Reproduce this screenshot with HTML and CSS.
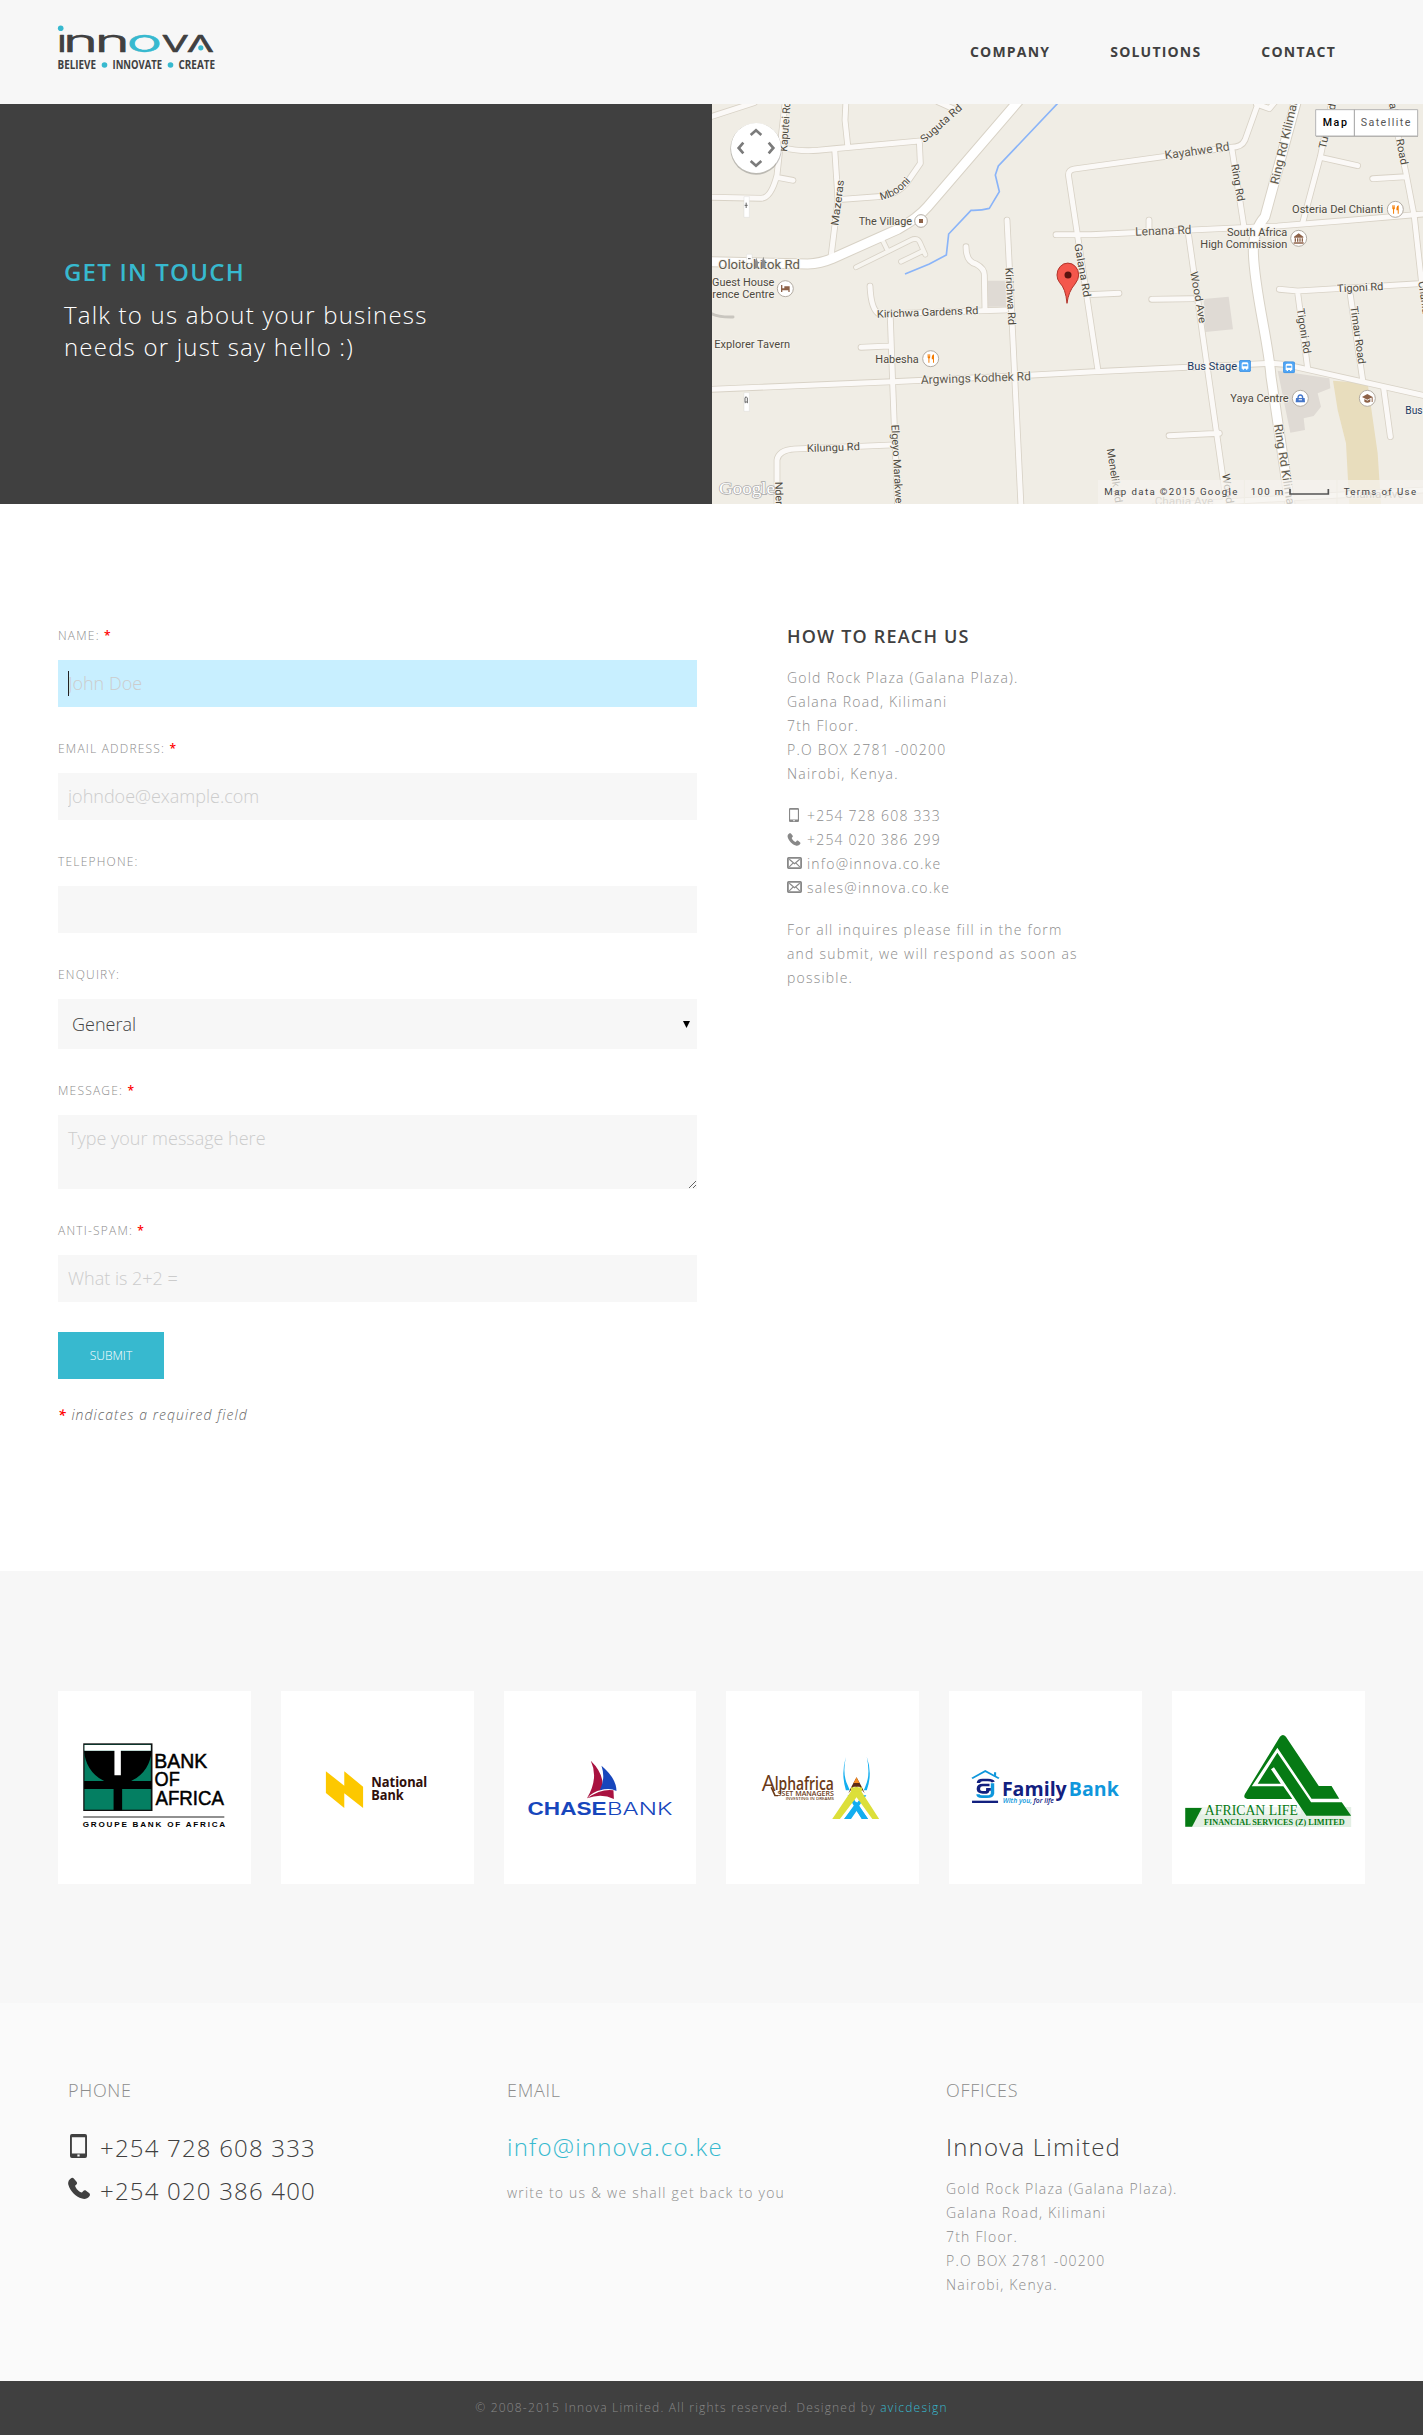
FILE: index.html
```html
<!DOCTYPE html>
<html lang="en">
<head>
<meta charset="utf-8">
<title>Innova Limited - Contact</title>
<link rel="stylesheet" href="styles.css">
</head>
<body>
<svg class="sprite" width="0" height="0" aria-hidden="true">
  <symbol id="i-mobile" viewBox="0 0 18 24" preserveAspectRatio="none"><path fill="currentColor" fill-rule="evenodd" d="M2 0h14a2 2 0 0 1 2 2v20a2 2 0 0 1-2 2H2a2 2 0 0 1-2-2V2a2 2 0 0 1 2-2zm0 3.200v16.300h14V3.200zM7.800 20.600v2h2.400v-2z"/></symbol>
  <symbol id="i-phone" viewBox="0 0 24 24"><path fill="currentColor" d="M3 1C4 0 5.500 0 6.300 1l3 3.600c.9 1 .8 2-.1 2.900L7.700 9c1 3.500 4.300 6.700 7.500 7.400l1.500-1.700c.8-.9 2-1 3-.2l3.300 2.500c1.200.9 1.300 2.200.3 3.400-2 2.500-4.800 3.600-8 2.600C8 21 2.400 14.500.3 7.500-.3 5 .8 2.600 3 1z"/></symbol>
  <symbol id="i-mail" viewBox="0 0 20 16"><rect x="1.200" y="1.200" width="17.600" height="13.600" rx="1" fill="none" stroke="currentColor" stroke-width="2.400"/><path fill="none" stroke="currentColor" stroke-width="1.500" d="M3 3l7 6 7-6M3 13.200l5-5M17 13.200l-5-5"/></symbol>
  <symbol id="i-food" viewBox="0 0 24 26"><path fill="#f57c00" d="M2 0h2v7h1V0h2v7h1V0h2v9q0 3-2.500 4V26h-3V13Q2 12 2 9zM22 0v26h-3V15h-4V8q1-7 7-8z"/></symbol>
  <symbol id="i-bus" viewBox="0 0 36 36"><rect x="1" y="1" width="34" height="34" rx="5" fill="#4fa5f5" stroke="#2f86dc" stroke-width="2"/><path fill="#fff" fill-rule="evenodd" d="M12 7h12q4 0 4 5v14h-3v3h-4v-3h-6v3h-4v-3H8V12q0-5 4-5zm-1 6v6h14v-6z"/></symbol>
</svg>

<header class="header">
  <a class="logo" href="#" aria-label="Innova">
    <svg width="160" height="50" viewBox="57 24 160 50">
      <g class="word">
        <text transform="translate(56.600 52) scale(1.500 1)">ı</text>
        <text transform="translate(63 52) scale(1.920 1)">n</text>
        <text transform="translate(94.700 52) scale(1.920 1)">n</text>
        <text class="cy" transform="translate(126.700 52) scale(1.920 1)">o</text>
        <text transform="translate(161 52) scale(1.650 1)">v</text>
        <text transform="translate(214.500 35) rotate(180) scale(1.650 1)">v</text>
      </g>
      <g class="dots"><circle cx="60.700" cy="28.300" r="2.800"/><circle cx="200.800" cy="47.800" r="2.600"/><circle cx="104.500" cy="65" r="2.800"/><circle cx="170.500" cy="65" r="2.800"/></g>
      <g class="tag"><text x="57.500" y="69" textLength="38.500" lengthAdjust="spacingAndGlyphs">BELIEVE</text><text x="112.500" y="69" textLength="49.500" lengthAdjust="spacingAndGlyphs">INNOVATE</text><text x="178.500" y="69" textLength="36.500" lengthAdjust="spacingAndGlyphs">CREATE</text></g>
    </svg>
  </a>
  <nav class="nav"><a href="#">COMPANY</a><a href="#">SOLUTIONS</a><a href="#">CONTACT</a></nav>
</header>

<section class="hero">
  <div class="intro">
    <h1>GET IN TOUCH</h1>
    <p>Talk to us about your business<br>needs or just say hello :)</p>
  </div>
  <svg class="map" width="711" height="400" viewBox="3 12 2133 1200">
    <defs>
      <g id="minor">
        <path d="M0 50L130 8M222 12L205 160L198 225Q180 295 150 295L0 292M198 232L246 241M405 0L402 60L410 135M215 142Q260 155 320 151L370 146L625 123L628 190L590 245Q560 285 500 290L395 298M371 146L381 300L360 470M680 5L730 28"/>
        <path d="M477 558Q480 630 505 642L885 630M765 440Q765 485 795 492Q820 505 820 525L822 630M888 360L900 600L930 1220M538 655L545 850L550 980L560 1220M450 742L535 738"/>
        <path d="M0 868L545 845L950 826L1150 815L1680 790L1720 793L2140 887M198 1220V1080Q203 1050 250 1047L540 1035"/>
        <path d="M1160 805L1073 230Q1070 210 1090 207L1560 142Q1592 142 1602 120L1642 8M1636 12L1675 26L1690 8M1035 404H1140L1440 390L1700 378L1900 362L2140 342M1562 142L1598 375M1314 360V395M1432 400L1480 740L1548 1220M1130 584L1224 580M1322 598L1445 596M1374 1007L1525 1000"/>
        <path d="M1862 8L1828 170L1776 365M1828 172L1940 197M2040 8L2085 220L2110 350L2132 550M1985 236L2085 230M1705 568L1760 573L2140 550M1760 578L1790 805M1918 585L1955 840M2018 865L2038 1010M1330 1218L2140 1170"/>
      </g>
      <path id="lot" d="M435 502L600 420Q620 410 628 430L643 464M570 485L638 452M512 415L530 452"/>
      <path id="major" d="M0 485L290 492Q330 490 365 475L560 388Q620 355 650 320L930 -6M1757 0L1662 350Q1627 390 1627 450C1627 560 1672 720 1680 830L1738 1220"/>
    </defs>
    <rect x="0" y="0" width="2140" height="1220" fill="#f0ede5"/>
    <g fill="#dfdad4"><path d="M830 542h56v78h-56zM1478 597L1553 590L1566 688L1483 696zM1700 812L1855 835L1858 865L1820 880L1830 920L1808 948L1778 955L1782 990L1738 998z"/></g>
    <path fill="#e8ddbd" d="M1866 842L1970 850L2000 1060L2010 1215L1915 1215L1905 1030L1880 930z"/>
    <path d="M0 640Q20 652 66 651" fill="none" stroke="#c9c6bf" stroke-width="9" stroke-linecap="round"/>
    <use class="case" href="#minor"/><use class="case lot" href="#lot"/><use class="case big" href="#major"/>
    <use class="road" href="#minor"/><use class="road lot" href="#lot"/><use class="road big" href="#major"/>
    <path class="river" d="M1042 8L862 198L853 225L865 275L835 325Q810 332 780 331L713 402L706 465L655 492L582 522"/>

    <g class="lbl">
      <text transform="translate(228 155) rotate(-86)" textLength="150" lengthAdjust="spacingAndGlyphs">Kaputei Rd</text>
      <text transform="translate(640 130) rotate(-42)" textLength="155" lengthAdjust="spacingAndGlyphs">Suguta Rd</text>
      <text transform="translate(382 378) rotate(-83)" textLength="138" lengthAdjust="spacingAndGlyphs">Mazeras</text>
      <path id="mbo" d="M510 300Q560 292 608 234" fill="none" stroke="none"/><text><textPath href="#mbo">Mbooni</textPath></text>
      <text x="443" y="374" textLength="160" lengthAdjust="spacingAndGlyphs">The Village</text>
      <text class="l" x="22" y="508" textLength="245" lengthAdjust="spacingAndGlyphs">Oloitokitok Rd</text>
      <text x="3" y="558" textLength="187" lengthAdjust="spacingAndGlyphs">Guest House</text>
      <text x="4" y="593" textLength="186" lengthAdjust="spacingAndGlyphs">rence Centre</text>
      <text x="10" y="743" textLength="227" lengthAdjust="spacingAndGlyphs">Explorer Tavern</text>
      <text transform="translate(498 653) rotate(-2)" textLength="305" lengthAdjust="spacingAndGlyphs">Kirichwa Gardens Rd</text>
      <text x="493" y="788" textLength="130" lengthAdjust="spacingAndGlyphs">Habesha</text>
      <text class="l" transform="translate(630 852) rotate(-2)" textLength="330" lengthAdjust="spacingAndGlyphs">Argwings Kodhek Rd</text>
      <text transform="translate(883 503) rotate(87)" textLength="173" lengthAdjust="spacingAndGlyphs">Kirichwa Rd</text>
      <text transform="translate(288 1056) rotate(-2)" textLength="159" lengthAdjust="spacingAndGlyphs">Kilungu Rd</text>
      <text transform="translate(541 974) rotate(87)" textLength="237" lengthAdjust="spacingAndGlyphs">Elgeyo Marakwe</text>
      <text transform="translate(192 1146) rotate(88)">Nderi Rd</text>
      <text class="l" transform="translate(1363 178) rotate(-8)" textLength="196" lengthAdjust="spacingAndGlyphs">Kayahwe Rd</text>
      <text transform="translate(1560 194) rotate(80)" textLength="113" lengthAdjust="spacingAndGlyphs">Ring Rd</text>
      <text class="l" transform="translate(1702 255) rotate(-77)" textLength="275" lengthAdjust="spacingAndGlyphs">Ring Rd Kilimani</text>
      <text class="l" transform="translate(1273 407) rotate(-2)" textLength="169" lengthAdjust="spacingAndGlyphs">Lenana Rd</text>
      <text x="1548" y="407" textLength="181" lengthAdjust="spacingAndGlyphs">South Africa</text>
      <text x="1468" y="443" textLength="261" lengthAdjust="spacingAndGlyphs">High Commission</text>
      <text x="1743" y="338" textLength="274" lengthAdjust="spacingAndGlyphs">Osteria Del Chianti</text>
      <text transform="translate(1844 148) rotate(-77)" textLength="138" lengthAdjust="spacingAndGlyphs">Turbo Rd</text>
      <text transform="translate(2026 -30) rotate(79)" textLength="230" lengthAdjust="spacingAndGlyphs">Chaka nu Road</text>
      <text transform="translate(1090 433) rotate(80)" textLength="162" lengthAdjust="spacingAndGlyphs">Galana Rd</text>
      <text transform="translate(1438 517) rotate(80)" textLength="156" lengthAdjust="spacingAndGlyphs">Wood Ave</text>
      <text transform="translate(1879 577) rotate(-3)" textLength="139" lengthAdjust="spacingAndGlyphs">Tigoni Rd</text>
      <text transform="translate(1757 627) rotate(81)" textLength="137" lengthAdjust="spacingAndGlyphs">Tigoni Rd</text>
      <text transform="translate(1918 620) rotate(82)" textLength="175" lengthAdjust="spacingAndGlyphs">Timau Road</text>
      <text transform="translate(2122 545) rotate(82)">Chania</text>
      <text class="bus" x="1429" y="809" textLength="149" lengthAdjust="spacingAndGlyphs">Bus Stage</text>
      <text x="1558" y="905" textLength="175" lengthAdjust="spacingAndGlyphs">Yaya Centre</text>
      <text class="bus" x="2083" y="941" textLength="52" lengthAdjust="spacingAndGlyphs">Bus</text>
      <text class="l" transform="translate(1689 974) rotate(81)" textLength="275" lengthAdjust="spacingAndGlyphs">Ring Rd Kilimani</text>
      <text transform="translate(1187 1047) rotate(81)" textLength="165" lengthAdjust="spacingAndGlyphs">Menelik Rd</text>
      <text transform="translate(1534 1123) rotate(82)" textLength="156" lengthAdjust="spacingAndGlyphs">Wood Ave</text>
      <text x="1331" y="1216" opacity=".6" textLength="176" lengthAdjust="spacingAndGlyphs">Chania Ave</text>
      <text x="1902" y="1194" opacity=".6" textLength="176" lengthAdjust="spacingAndGlyphs">Chania Ave</text>
    </g>

    <g class="poi"><circle cx="630" cy="363" r="19"/><circle cx="223" cy="566" r="24"/><circle cx="659" cy="776" r="24"/><circle cx="2053" cy="328" r="24"/><circle cx="1763" cy="415" r="24"/><circle cx="1768" cy="895" r="24"/><circle cx="1969" cy="895" r="24"/></g>
    <g fill="#8d6248"><path d="M624 357h12v12h-12zM210 555h4v10h6v-6h16v17h-4v-5h-18v5h-4zM1749 410l14-10 14 10v3h-28zM1751 415h4v10h-4zM1758 415h4v10h-4zM1765 415h4v10h-4zM1772 415h4v10h-4zM1748 427h30v4h-30zM1953 891l16-9 16 9-16 8zM1960 897l9 5 9-5v8q-9 6-18 0zM1982 892h3v14h-3z"/></g>
    <path fill="#4576c9" fill-rule="evenodd" d="M1755 894h4q0-11 9-11t9 11h4l1 13h-28zM1763 894h10q0-7-5-7t-5 7zM1763 898v3h10v-3z"/>
    <use href="#i-food" x="648" y="762" width="23" height="27"/><use href="#i-food" x="2042" y="315" width="23" height="27"/>
    <use href="#i-bus" x="1584" y="780" width="36" height="36"/><use href="#i-bus" x="1716" y="784" width="36" height="36"/>

    <path d="M1068 610Q1064 565 1046 548Q1038 538 1038 525A30 33 0 0 1 1103 525Q1103 538 1092 552Q1072 575 1068 610z" fill="#f4574c" stroke="#b1352c" stroke-width="3"/><circle cx="1071" cy="525" r="10.500" fill="#5b130f"/>

    <circle cx="135" cy="147" r="77" fill="#000" opacity=".22"/><circle cx="135" cy="144" r="75" fill="#fff"/>
    <path d="M119 105l16-14 16 14M119 183l16 14 16-14M97 128l-14 16 14 16M173 128l14 16-14 16" fill="none" stroke="#7b7b7b" stroke-width="8"/>
    <g fill="#fff" stroke="#d0d0d0" stroke-width="1"><path d="M99 290h16v62H99zM107 463h16v26h-16zM99 878h16v56H99z"/></g>
    <path d="M101 316h9M105.500 308v16M111 476h8M102 906v-12l3-4 4 4v12zM101 908h3M108 908h3" fill="none" stroke="#666" stroke-width="3"/>
    <path d="M131 505v-18l5-14 5 14v18zM152 505v-20l5-15 5 15v20z" fill="#8c8c8c"/>
    <text class="google" x="24" y="1181" textLength="168" lengthAdjust="spacingAndGlyphs">Google</text>

    <path d="M1161 1140H2136V1212H1161z" fill="#f5f3ee" opacity=".72"/>
    <path d="M1600 1140v72M1878 1140v72" stroke="#f0ede5" stroke-width="3"/>
    <g class="legal"><text x="1180" y="1185" textLength="399">Map data ©2015 Google</text><text x="1619" y="1185" textLength="98">100 m</text><text x="1898" y="1185" textLength="217">Terms of Use</text></g>
    <path d="M1737 1167v15h115v-15" fill="none" stroke="#555" stroke-width="5"/>

    <rect x="1815" y="32" width="306" height="79" fill="#000" opacity=".25"/>
    <path d="M1814 29h306v79h-306z" fill="#fff" stroke="#b5b5b5" stroke-width="3"/><path d="M1930 29v79" stroke="#a0a0a0" stroke-width="3"/>
    <text class="mode on" x="1835" y="78" textLength="73">Map</text><text class="mode" x="1949" y="78" textLength="149">Satellite</text>
  </svg>
</section>

<main class="main">
  <form class="form">
    <div class="field"><label for="name">NAME: <b>*</b></label><div class="focus"><input id="name" class="active" type="text" placeholder="John Doe"><i class="caret"></i></div></div>
    <div class="field"><label for="email">EMAIL ADDRESS: <b>*</b></label><input id="email" type="text" placeholder="johndoe@example.com"></div>
    <div class="field"><label for="tel">TELEPHONE:</label><input id="tel" type="text"></div>
    <div class="field"><label for="enq">ENQUIRY:</label><div class="pick"><select id="enq"><option>General</option></select><svg class="arrow" width="7" height="7" viewBox="0 0 7 7"><path d="M0 0h7L3.500 7z"/></svg></div></div>
    <div class="field"><label for="msg">MESSAGE: <b>*</b></label><textarea id="msg" placeholder="Type your message here"></textarea></div>
    <div class="field"><label for="spam">ANTI-SPAM: <b>*</b></label><input id="spam" type="text" placeholder="What is 2+2 ="></div>
    <button class="submit" type="button">SUBMIT</button>
    <p class="note"><b>*</b> indicates a required field</p>
  </form>
  <aside class="reach">
    <h2>HOW TO REACH US</h2>
    <p>Gold Rock Plaza (Galana Plaza).<br>Galana Road, Kilimani<br>7th Floor.<br>P.O BOX 2781 -00200<br>Nairobi, Kenya.</p>
    <ul>
      <li><svg class="m"><use href="#i-mobile"/></svg>+254 728 608 333</li>
      <li><svg class="p"><use href="#i-phone"/></svg>+254 020 386 299</li>
      <li><svg class="e"><use href="#i-mail"/></svg>info@innova.co.ke</li>
      <li><svg class="e"><use href="#i-mail"/></svg>sales@innova.co.ke</li>
    </ul>
    <p>For all inquires please fill in the form<br>and submit, we will respond as soon as<br>possible.</p>
  </aside>
</main>

<section class="clients">
  <svg viewBox="19 33 451 579" preserveAspectRatio="none">
    <rect x="78" y="190" width="162" height="203" fill="#111"/><rect x="81" y="194" width="155" height="195" fill="#047f62"/>
    <path d="M80 212H238Q234 275 190 303H238V327H169V391H149V327H80V303H127Q84 275 80 212z" fill="#000"/>
    <path d="M81 195h155v17H81zM151 212h15v74h-15z" fill="#fff"/>
    <g class="boa"><text x="244" y="263" textLength="124" lengthAdjust="spacingAndGlyphs">BANK</text><text x="245" y="318" textLength="59" lengthAdjust="spacingAndGlyphs">OF</text><text x="247" y="374" textLength="160" lengthAdjust="spacingAndGlyphs">AFRICA</text></g>
    <path d="M78 411h330" stroke="#222" stroke-width="3"/><text class="boas" x="77" y="440" textLength="333">GROUPE BANK OF AFRICA</text>
  </svg>
  <svg viewBox="541 33 451 579" preserveAspectRatio="none">
    <path d="M646 274L689 317V274L733 320V384L689 340V384L646 339z" fill="#fdc800"/>
    <g class="nat"><text x="752" y="321" textLength="131" lengthAdjust="spacingAndGlyphs">National</text><text x="752" y="360" textLength="76" lengthAdjust="spacingAndGlyphs">Bank</text></g>
  </svg>
  <svg viewBox="1062 33 451 579" preserveAspectRatio="none">
    <path d="M1265 242Q1299 285 1291 329Q1268 335 1256 355Q1284 295 1265 242zM1256 355Q1290 325 1318 331L1319 357Q1290 338 1256 355z" fill="#a91240"/>
    <path d="M1290 257Q1325 295 1325 333Q1310 322 1286 331Q1300 295 1290 257z" fill="#1746bc"/>
    <text class="chb" x="1117" y="404" textLength="185" lengthAdjust="spacingAndGlyphs">CHASE</text><text class="chl" x="1303" y="404" textLength="153" lengthAdjust="spacingAndGlyphs">BANK</text>
  </svg>
  <svg viewBox="37 33 452 579" preserveAspectRatio="none">
    <g class="alpha"><text class="a1" x="121" y="334" font-size="66" textLength="32" lengthAdjust="spacingAndGlyphs">A</text><path d="M143 322L152 347H159" fill="none" stroke="#6b3a17" stroke-width="4"/><text x="151" y="329" font-size="55" textLength="139" lengthAdjust="spacingAndGlyphs">lphafrica</text><text x="158" y="349" font-size="19" textLength="132" lengthAdjust="spacingAndGlyphs">SSET MANAGERS</text><text x="177" y="361" font-size="11" textLength="113" lengthAdjust="spacingAndGlyphs">INVESTING IN DREAMS</text></g>
    <path d="M318 231Q309 285 323 318L327 331H318Q306 280 318 231zM367 231Q376 285 364 318L360 331H367Q381 280 367 231zM322 346h8l40 71h-15zM358 346h8l-38 71h-14z" fill="#13aef0"/>
    <path d="M343 318L354 334L396 417H380L343 352L304 417H286L330 334z" fill="#dcdf3a"/><path d="M343 365L370 417H356L343 393L330 417H314z" fill="#13aef0"/>
    <path d="M343 292l7 16q8 18 12 32l-12-20h-14l-12 20q4-14 12-32z" fill="#5d2a12"/><path d="M343 292l7 17h-14z" fill="#f58a1f"/><path d="M330 322h26v12h-26z" fill="#dcdf3a"/>
  </svg>
  <svg viewBox="559 33 452 579" preserveAspectRatio="none">
    <path d="M613 295L644 273L676 295M667 277v11" fill="none" stroke="#0f97dc" stroke-width="5"/>
    <path d="M613 362h61v7h-61z" fill="#12207f"/>
    <path d="M661 310V340Q660 350 648 350H636Q627 350 627 343" fill="none" stroke="#0f97dc" stroke-width="8"/>
    <path d="M663 306Q660 300 650 300H638Q628 300 628 309M654 315H638Q628 315 628 325V329Q629 337 638 337H647Q650 337 650 328H657" fill="none" stroke="#12207f" stroke-width="8"/>
    <text class="fam" x="683" y="348" fill="#12207f" textLength="152" lengthAdjust="spacingAndGlyphs">Family</text><text class="fam" x="840" y="348" fill="#0f97dc" textLength="117" lengthAdjust="spacingAndGlyphs">Bank</text>
    <text class="fams" x="685" y="369" fill="#0f97dc" textLength="69" lengthAdjust="spacingAndGlyphs">With you,</text><text class="fams" x="757" y="369" fill="#12207f" textLength="48" lengthAdjust="spacingAndGlyphs">for life</text>
  </svg>
  <svg viewBox="1081 33 452 579" preserveAspectRatio="none">
    <path d="M1112 381h389v60h-389z" fill="#e3efe4"/><path d="M1153 381h230v22h-235z" fill="#fff" opacity=".5"/>
    <path d="M1112 384h39l-23 56h-16z" fill="#067a14"/>
    <path d="M1334 170Q1341 160 1348 170L1425 318H1455L1473 356H1408L1328 203L1268 319H1342L1363 357H1258Q1247 355 1252 342zM1328 218L1407 367H1479L1501 407H1396L1320 262L1313 268L1336 311H1282z" fill="#067a14"/>
    <text class="al1" x="1158" y="404" textLength="218" lengthAdjust="spacingAndGlyphs">AFRICAN LIFE</text><text class="al2" x="1156" y="434" textLength="330" lengthAdjust="spacingAndGlyphs">FINANCIAL SERVICES (Z) LIMITED</text>
  </svg>
</section>

<footer class="footer">
  <div class="cols">
    <div><h3>PHONE</h3><div class="tels"><p><svg class="m"><use href="#i-mobile"/></svg>+254 728 608 333</p><p><svg class="p"><use href="#i-phone"/></svg>+254 020 386 400</p></div></div>
    <div class="mailcol"><h3>EMAIL</h3><a class="lead" href="#">info@innova.co.ke</a><p>write to us &amp; we shall get back to you</p></div>
    <div class="office"><h3>OFFICES</h3><span class="lead">Innova Limited</span><p>Gold Rock Plaza (Galana Plaza).<br>Galana Road, Kilimani<br>7th Floor.<br>P.O BOX 2781 -00200<br>Nairobi, Kenya.</p></div>
  </div>
  <div class="copy">© 2008-2015 Innova Limited. All rights reserved. Designed by <a href="#">avicdesign</a></div>
</footer>
</body>
</html>
```
FILE: styles.css
```css
* { box-sizing: border-box; margin: 0; padding: 0; }
body { font: 300 14px/24px "Open Sans", sans-serif; letter-spacing: 1.2px; color: #8c8c8c; background: #fff; }
a { text-decoration: none; color: #37b9cf; }
.sprite { position: absolute; }

.header { height: 104px; background: #f7f7f7; display: flex; justify-content: space-between; padding: 24px 87px 0 57px; }
.logo { height: 50px; }
.logo svg { display: block; overflow: visible; }
.word text { font: 300 31px Inter, sans-serif; letter-spacing: 0; fill: #404041; stroke: #404041; stroke-width: .7px; stroke-linejoin: round; }
.word .cy { fill: #37b9cf; stroke: #37b9cf; }
.dots { fill: #37b9cf; }
.tag text { font: 700 11.5px "Open Sans", sans-serif; letter-spacing: 0; fill: #404041; }
.nav { display: flex; gap: 60px; padding-top: 16px; }
.nav a { font-size: 14px; font-weight: 700; letter-spacing: 1.2px; color: #404040; }

.hero { display: flex; height: 400px; background: #404040; }
.intro { width: 712px; padding: 152px 64px 0; }
.intro h1 { font-size: 24px; line-height: 32px; font-weight: 600; color: #37b9cf; margin-bottom: 11px; }
.intro p { font-size: 24px; line-height: 32px; color: #fff; }
.map { display: block; flex: none; }
.case { fill: none; stroke: #d8d2c6; stroke-width: 20px; stroke-linecap: round; stroke-linejoin: round; }
.road { fill: none; stroke: #fbf9f7; stroke-width: 15px; stroke-linecap: round; stroke-linejoin: round; }
.case.big { stroke-width: 33px; }
.road.big { stroke: #fff; stroke-width: 27px; }
.case.lot { stroke-width: 17px; }
.road.lot { stroke: #f7f5f0; stroke-width: 12px; }
.river { fill: none; stroke: #8ab4f8; stroke-width: 5px; }
.lbl text { font: 400 32px Roboto, sans-serif; letter-spacing: 0; fill: #4e4a40; stroke: #f5f2ec; stroke-width: 5px; paint-order: stroke; }
.lbl .l { font-size: 36px; fill: #5f5a4e; }
.lbl .bus { fill: #1c3a63; }
.poi circle { fill: #fff; stroke: #b3aca3; stroke-width: 3px; }
.google { font: 400 50px "Liberation Serif", serif; letter-spacing: 0; fill: #fff; stroke: #aaa; stroke-width: 4px; paint-order: stroke; }
.legal text { font: 400 29px Roboto, sans-serif; letter-spacing: 0; fill: #444; }
.mode { font: 400 32px Roboto, sans-serif; letter-spacing: 0; fill: #565656; }
.mode.on { font-weight: 500; fill: #000; }

.main { display: flex; height: 1067px; padding: 120px 58px 0; }
.form { width: 639px; margin-right: 90px; }
.field { margin-bottom: 30px; }
.field label { display: block; height: 24px; font-size: 12px; margin-bottom: 12px; }
.field + .field { margin-top: -1px; padding-top: 1px; }
.field b, .note b { color: #f00; font-weight: 600; }
input, select, textarea { display: block; width: 100%; height: 47px; border: 0; border-radius: 0; outline: 0; background: #f7f7f7; padding: 0 10px 1px; font: 300 18px "Open Sans", sans-serif; color: #444; }
::placeholder { color: #ccc; opacity: 1; }
.active { background: #c8efff; }
.focus, .pick { position: relative; }
.caret { position: absolute; left: 10px; top: 11px; width: 1px; height: 25px; background: #222; }
select { height: 50px; appearance: none; padding: 0 14px; }
.arrow { position: absolute; right: 7px; top: 22px; }
textarea { height: 74px; padding-top: 11px; resize: vertical; }
.submit { display: block; width: 106px; height: 47px; border: 0; background: #37b9cf; color: #fff; font: 300 12px "Open Sans", sans-serif; }
.note { margin-top: 24px; font-style: italic; letter-spacing: 1.05px; color: #666; }
.reach h2 { font-size: 18px; line-height: 24px; font-weight: 600; color: #404040; margin-bottom: 18px; }
.reach ul { list-style: none; margin: 18px 0; }
.reach li { display: flex; align-items: center; }
.reach svg { flex: none; color: #888; }
.reach .m { width: 10px; height: 14px; margin: -2px 8px 0 2px; }
.reach .p { width: 14px; height: 13px; margin: -2px 6px 0 0; }
.reach .e { width: 15px; height: 12px; margin: -2px 5px 0 0; }

.clients { height: 432px; background: #f7f7f7; padding: 120px 58px 0; display: grid; grid-template-columns: repeat(6, 1fr); gap: 30px; }
.clients svg { display: block; width: 100%; height: 193px; background: #fff; }
.clients text { letter-spacing: 0; }
.boa text { font: 400 62px "Liberation Sans", sans-serif; stroke: #000; stroke-width: 1.5px; }
.clients .boas { font: 700 19px "Liberation Sans", sans-serif; }
.nat text { font: 700 43px "Noto Sans", sans-serif; fill: #30100c; }
.clients .chb { font: 700 53px "Liberation Sans", sans-serif; fill: #1746bc; }
.clients .chl { font: 300 52px Inter, sans-serif; fill: #1746bc; }
.alpha text { font-family: "Open Sans", sans-serif; font-weight: 600; fill: #6b3a17; }
.alpha .a1 { font-weight: 400; }
.clients .fam { font: 700 59px "Open Sans", sans-serif; }
.clients .fams { font: italic 600 19px "Open Sans", sans-serif; }
.clients .al1 { font: 400 42px "Liberation Serif", serif; fill: #067a14; }
.clients .al2 { font: 700 25px "Liberation Serif", serif; fill: #067a14; }

.cols { height: 378px; background: #fafafa; padding: 75px 38px 0 68px; display: grid; grid-template-columns: repeat(3, 439px); }
.cols h3 { font-size: 18px; line-height: 24px; font-weight: 300; letter-spacing: .7px; margin-bottom: 24px; }
.tels p { display: flex; align-items: center; font-size: 24px; line-height: 43px; color: #404040; }
.tels svg { color: #404040; }
.tels .m { width: 17px; height: 24px; margin: -4px 13px 0 2px; }
.tels .p { width: 22px; height: 23px; margin: -4px 10px 0 0; }
.lead { display: block; font-size: 24px; line-height: 32px; margin-top: 29px; }
.mailcol p { margin-top: 18px; }
.office .lead { color: #404040; }
.office p { margin-top: 14px; }
.copy { height: 54px; background: #404040; padding-top: 15px; text-align: center; font-size: 12px; color: #8a8a8a; }
```
